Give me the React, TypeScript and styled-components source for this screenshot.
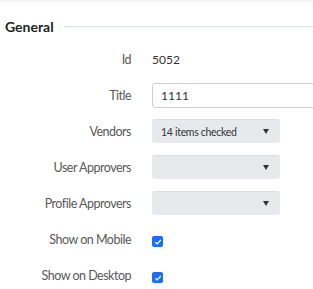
import { FC } from 'react'
import styled, { createGlobalStyle } from 'styled-components'

const GlobalStyle = createGlobalStyle`
  body {
    margin: 0;
    background: #fff;
    font-family: Lato, 'Open Sans', sans-serif;
  }
`

const Page = styled.div`
  width: 313px;
  height: 289px;
  overflow: hidden;
  border-top: 2px solid #f5f5f5;
  box-sizing: border-box;
`

const SectionHeader = styled.div`
  display: flex;
  align-items: center;
  gap: 10px;
  height: 49px;
  padding-left: 5px;
  box-sizing: border-box;
`

const SectionTitle = styled.h3`
  margin: 0;
  font-size: 14px;
  font-weight: 700;
  color: #222;
`

const SectionLine = styled.div`
  flex: 1;
  height: 1px;
  background: #d3deec;
`

const Form = styled.div`
  display: grid;
  grid-template-columns: 131px 1fr;
  grid-auto-rows: 36px;
  column-gap: 21px;
  align-items: center;
  margin-top: -10px;
`

const Label = styled.label`
  text-align: right;
  font-size: 12.5px;
  letter-spacing: -0.5px;
  color: #595959;
`

const Value = styled.span`
  font-size: 12px;
  color: #333;
`

const TextInput = styled.input`
  box-sizing: border-box;
  width: 180px;
  height: 25px;
  border: 1px solid #cfcfcf;
  border-radius: 3px;
  padding: 0 8px;
  font: inherit;
  font-size: 12px;
  color: #333;
  outline: none;
`

const Select = styled.div`
  box-sizing: border-box;
  width: 128px;
  height: 24px;
  display: flex;
  align-items: center;
  justify-content: space-between;
  padding: 0 9px;
  background: #e7e9ed;
  border-top: 1px solid #dcdee2;
  border-radius: 3px;
  font-size: 10.5px;
  letter-spacing: -0.3px;
  color: #333;
`

const Caret = styled.span`
  width: 0;
  height: 0;
  border-left: 3px solid transparent;
  border-right: 3px solid transparent;
  border-top: 5px solid #333;
  margin-right: 2px;
`

const Check = styled.span`
  display: inline-flex;
  align-items: center;
  justify-content: center;
  width: 11px;
  height: 11px;
  border-radius: 2px;
  background: #1a6ef5;
`

const Checkbox: FC = () => (
  <Check>
    <svg width="8" height="8" viewBox="0 0 8 8">
      <path d="M1.3 4.2 L3.2 6 L6.8 2" fill="none" stroke="#fff" strokeWidth="1.2" />
    </svg>
  </Check>
)

const App: FC = () => (
  <Page>
    <GlobalStyle />
    <SectionHeader>
      <SectionTitle>General</SectionTitle>
      <SectionLine />
    </SectionHeader>
    <Form>
      <Label>Id</Label>
      <Value>5052</Value>
      <Label>Title</Label>
      <TextInput defaultValue="1111" />
      <Label>Vendors</Label>
      <Select>
        <span>14 items checked</span>
        <Caret />
      </Select>
      <Label>User Approvers</Label>
      <Select>
        <span />
        <Caret />
      </Select>
      <Label>Profile Approvers</Label>
      <Select>
        <span />
        <Caret />
      </Select>
      <Label>Show on Mobile</Label>
      <div>
        <Checkbox />
      </div>
      <Label>Show on Desktop</Label>
      <div>
        <Checkbox />
      </div>
    </Form>
  </Page>
)

export default App
